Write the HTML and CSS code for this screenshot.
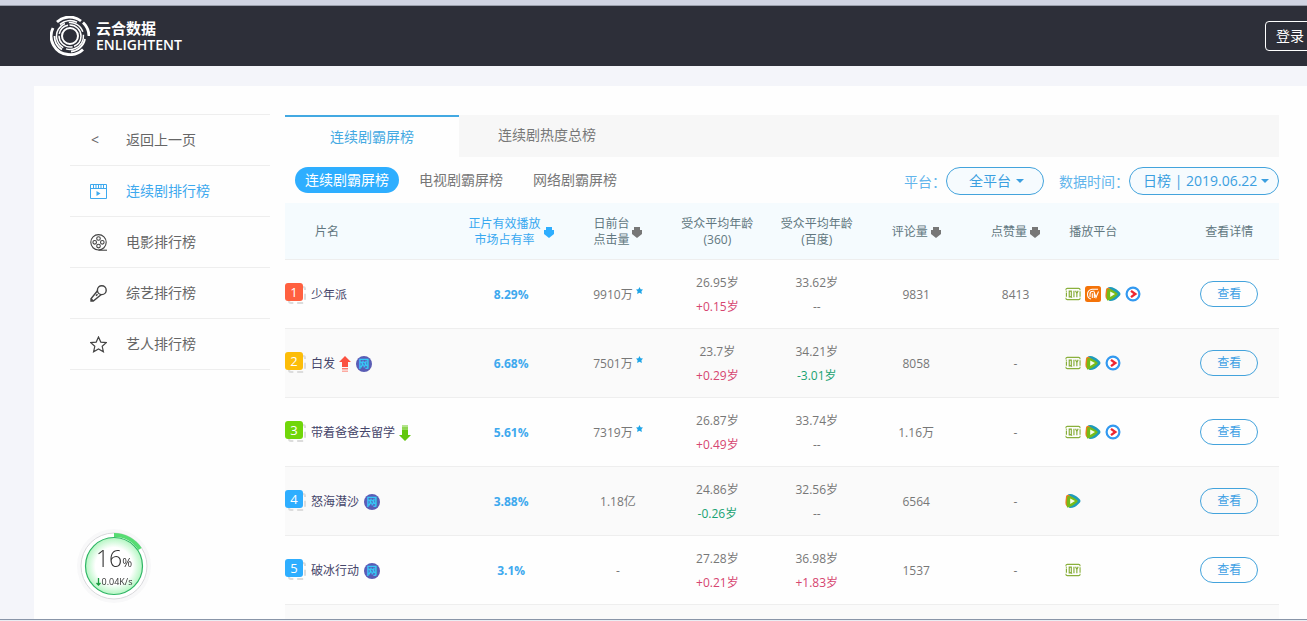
FILE: index.html
```html
<!DOCTYPE html>
<html lang="zh-CN">
<head>
<meta charset="utf-8">
<meta name="viewport" content="width=device-width, initial-scale=1">
<title>云合数据 - 连续剧霸屏榜</title>
<link rel="stylesheet" href="styles.css">
</head>
<body>
<svg class="defs" aria-hidden="true">
  <symbol id="sort" viewBox="0 0 10 11"><path d="M2 0h6v3h2v4L5 11 0 7V3h2z" fill="currentColor"/></symbol>
  <symbol id="star" viewBox="0 0 8 8"><path d="M4 0 5.300 2.500 8 2.800 6.200 4.900 6.700 8 4 6.700 1.300 8 1.800 4.900 0 2.800l2.700-.3z" fill="#1ea5e8"/></symbol>
  <symbol id="up" viewBox="0 0 12 16"><path d="M6 0l6 6H9v5H3V6H0z" fill="#fb5140"/><path d="M3 12h6v1.500H3z" fill="#fd7a6c"/><path d="M3 14.500h6V16H3z" fill="#fdaaa1"/></symbol>
  <symbol id="down" viewBox="0 0 12 16"><path d="M3 0h6v2H3z" fill="#b5e48f"/><path d="M3 2h6v2.500H3z" fill="#8fd652"/><path d="M3 4.500h6V10h3l-6 6-6-6h3z" fill="#62c70b"/></symbol>
  <symbol id="iqiyi" viewBox="0 0 17 14"><path d="M1 3V2.500Q1 1 2.500 1H14.500Q16 1 16 2.500V3M1 11v.5Q1 13 2.500 13H14.500Q16 13 16 11.500V11M16 4v6" fill="none" stroke="#8ab03c" stroke-width="1.200"/><path d="M1.500 5.500V10M1.500 3.600v1M4.500 4h2.200v6H4.500zM6 9l1.400 2M9.500 3.500v7M11.200 3.500l1.400 3 1.400-3M12.600 6.500v4" fill="none" stroke="#83aa33" stroke-width="1.200"/></symbol>
  <symbol id="mango" viewBox="0 0 16 16"><rect width="16" height="16" rx="2.500" fill="#f47309"/><path d="M6 13Q2.500 12 2.500 8.500 2.500 4 7 3.200h6M5 11V8Q5 5.300 8 5.300h1.500M7.300 7.200V12M9.300 6v6M9.300 6.500l1.700 5 2.500-6" fill="none" stroke="#fff" stroke-width="1.100"/></symbol>
  <symbol id="tencent" viewBox="0 0 16 16"><path d="M3 1.300Q8-.3 14 5.500 17 8 14 10.500 9 15.800 4 15 7 8 3 1.300z" fill="#1e9cb9"/><path d="M1 3.500Q1.500 1 4 2L8 5 2 13.500Q0 12 .5 8z" fill="#ef7a20"/><path d="M2.500 3Q6 2.500 12 7q1.500 1 0 2.200Q6 14.500 2 14.500 1 9 2.500 3z" fill="#75bb18"/><path d="M5.200 5.500 10 8l-4.800 3z" fill="#f8ffe9"/></symbol>
  <symbol id="youku" viewBox="0 0 16 16"><circle cx="8" cy="8" r="6.400" fill="#fff" stroke="#3299f0" stroke-width="2.200"/><path d="M6 4.900 10.300 8 6 11.100" fill="none" stroke="#ee2631" stroke-width="2.400"/></symbol>
</svg>

<div class="window-edge"></div>
<header class="site-header">
  <a class="brand" href="#">
    <svg class="brand-mark" viewBox="0 0 40 40" fill="none" stroke="#fff" aria-hidden="true">
      <circle cx="20" cy="20" r="8" stroke-width="2"/>
      <circle cx="20" cy="20" r="11" stroke-width="1.500" stroke-dasharray="13 1.500 20 2"/>
      <circle cx="20" cy="20" r="13.500" stroke-width="1.500" stroke-dasharray="18 3 30 4" transform="rotate(30 20 20)"/>
      <path d="M7 6A18.500 18.500 0 0 1 31 5M39 20A19 19 0 0 0 33 6.500M3 12A18.500 18.500 0 0 0 18 38.500M18 38.500A18.500 18.500 0 0 0 33 33.500" stroke-width="2.800"/>
      <path d="M10 8.500A15.500 15.500 0 0 1 27 6.200M4.500 20A15.500 15.500 0 0 0 12 33.500M35 23A15.500 15.500 0 0 1 21 35.500" stroke-width="1.800"/>
    </svg>
    <span class="brand-text"><span class="brand-cn">云合数据</span><span class="brand-en">ENLIGHTENT</span></span>
  </a>
  <button class="login" type="button">登录</button>
</header>

<div class="page">
  <div class="panel">
    <nav class="sidebar">
      <a class="side-link" href="#"><span class="side-icon back">&lt;</span>返回上一页</a>
      <a class="side-link active" href="#"><span class="side-icon"><svg viewBox="0 0 17 15" fill="none" stroke="currentColor"><path d="M.5.5h16v14H.5zM.5 4.500h16M3.500.5v4M6 .5v4M8.500.5v4M11 .5v4M13.500.5v4"/><path d="M6.500 7v5l4-2.500z" fill="currentColor" stroke="none"/></svg></span>连续剧排行榜</a>
      <a class="side-link" href="#"><span class="side-icon"><svg viewBox="0 0 17 17" fill="none" stroke="currentColor" stroke-width="1.100"><circle cx="8.500" cy="8.300" r="7.700"/><circle cx="8.500" cy="4.500" r="1.800"/><circle cx="8.500" cy="12.100" r="1.800"/><circle cx="4.700" cy="8.300" r="1.800"/><circle cx="12.300" cy="8.300" r="1.800"/><path d="M8.500 16.200H17"/></svg></span>电影排行榜</a>
      <a class="side-link" href="#"><span class="side-icon"><svg viewBox="0 0 17 17" fill="none" stroke="currentColor" stroke-width="1.400"><circle cx="11.800" cy="5.200" r="4.400"/><path d="M7.500 5.800 1 13.700V16h2.300l8-6.500M1 13.700 3.300 16M6 10.800l1.500-1.600"/></svg></span>综艺排行榜</a>
      <a class="side-link" href="#"><span class="side-icon"><svg viewBox="0 0 17 17" fill="none" stroke="currentColor" stroke-width="1.200"><path d="M8.500 1 10.800 6.100 16.300 6.600 12.200 10.300 13.400 15.800 8.500 13 3.600 15.800 4.800 10.300.7 6.600 6.200 6.100z"/></svg></span>艺人排行榜</a>
    </nav>

    <main class="content">
      <div class="tabs">
        <button class="tab active" type="button">连续剧霸屏榜</button>
        <button class="tab" type="button">连续剧热度总榜</button>
      </div>
      <div class="filters">
        <div class="pills">
          <button class="pill active" type="button">连续剧霸屏榜</button>
          <button class="pill" type="button">电视剧霸屏榜</button>
          <button class="pill" type="button">网络剧霸屏榜</button>
        </div>
        <div class="selects">
          <div class="field"><label for="platform">平台<span class="colon">：</span></label><span class="select-box"><select id="platform" class="platform"><option>全平台</option></select></span></div>
          <div class="field"><label for="date">数据时间<span class="colon">：</span></label><span class="select-box near"><select id="date" class="date"><option>日榜 | 2019.06.22</option></select></span></div>
        </div>
      </div>

      <table class="ranking">
        <colgroup><col class="c-name"><col class="c-share"><col class="c-num"><col class="c-num"><col class="c-num"><col class="c-num"><col class="c-num"><col class="c-plat"><col></colgroup>
        <thead>
          <tr>
            <th class="h-name">片名</th>
            <th class="sorted"><span class="sortable"><span>正片有效播放<br>市场占有率</span><svg><use href="#sort"/></svg></span></th>
            <th><span class="sortable"><span>日前台<br>点击量</span><svg><use href="#sort"/></svg></span></th>
            <th>受众平均年龄<br>(360)</th>
            <th>受众平均年龄<br>(百度)</th>
            <th><span class="sortable"><span>评论量</span><svg><use href="#sort"/></svg></span></th>
            <th><span class="sortable"><span>点赞量</span><svg><use href="#sort"/></svg></span></th>
            <th class="h-plat">播放平台</th>
            <th>查看详情</th>
          </tr>
        </thead>
        <tbody>
          <tr>
            <td><div class="title"><span class="rank r1">1</span><span>少年派</span></div></td>
            <td class="share">8.29%</td>
            <td><span class="clicks">9910万<svg><use href="#star"/></svg></span></td>
            <td>26.95岁<br><span class="rise">+0.15岁</span></td>
            <td>33.62岁<br>--</td>
            <td>9831</td><td>8413</td>
            <td class="media"><div class="platforms"><svg><use href="#iqiyi"/></svg><svg><use href="#mango"/></svg><svg><use href="#tencent"/></svg><svg><use href="#youku"/></svg></div></td>
            <td class="media"><button class="view" type="button">查看</button></td>
          </tr>
          <tr>
            <td><div class="title"><span class="rank r2">2</span><span>白发</span><svg class="trend"><use href="#up"/></svg><span class="web">网</span></div></td>
            <td class="share">6.68%</td>
            <td><span class="clicks">7501万<svg><use href="#star"/></svg></span></td>
            <td>23.7岁<br><span class="rise">+0.29岁</span></td>
            <td>34.21岁<br><span class="fall">-3.01岁</span></td>
            <td>8058</td><td>-</td>
            <td class="media"><div class="platforms"><svg><use href="#iqiyi"/></svg><svg><use href="#tencent"/></svg><svg><use href="#youku"/></svg></div></td>
            <td class="media"><button class="view" type="button">查看</button></td>
          </tr>
          <tr>
            <td><div class="title"><span class="rank r3">3</span><span>带着爸爸去留学</span><svg class="trend"><use href="#down"/></svg></div></td>
            <td class="share">5.61%</td>
            <td><span class="clicks">7319万<svg><use href="#star"/></svg></span></td>
            <td>26.87岁<br><span class="rise">+0.49岁</span></td>
            <td>33.74岁<br>--</td>
            <td>1.16万</td><td>-</td>
            <td class="media"><div class="platforms"><svg><use href="#iqiyi"/></svg><svg><use href="#tencent"/></svg><svg><use href="#youku"/></svg></div></td>
            <td class="media"><button class="view" type="button">查看</button></td>
          </tr>
          <tr>
            <td><div class="title"><span class="rank">4</span><span>怒海潜沙</span><span class="web">网</span></div></td>
            <td class="share">3.88%</td>
            <td>1.18亿</td>
            <td>24.86岁<br><span class="fall">-0.26岁</span></td>
            <td>32.56岁<br>--</td>
            <td>6564</td><td>-</td>
            <td class="media"><div class="platforms"><svg><use href="#tencent"/></svg></div></td>
            <td class="media"><button class="view" type="button">查看</button></td>
          </tr>
          <tr>
            <td><div class="title"><span class="rank">5</span><span>破冰行动</span><span class="web">网</span></div></td>
            <td class="share">3.1%</td>
            <td>-</td>
            <td>27.28岁<br><span class="rise">+0.21岁</span></td>
            <td>36.98岁<br><span class="rise">+1.83岁</span></td>
            <td>1537</td><td>-</td>
            <td class="media"><div class="platforms"><svg><use href="#iqiyi"/></svg></div></td>
            <td class="media"><button class="view" type="button">查看</button></td>
          </tr>
          <tr><td colspan="9"></td></tr>
        </tbody>
      </table>
    </main>
  </div>
</div>
<div class="window-foot"></div>

<aside class="monitor">
  <svg class="monitor-ring" viewBox="0 0 76 76" aria-hidden="true">
    <defs><radialGradient id="glow"><stop offset=".65" stop-color="#fff"/><stop offset="1" stop-color="#b4f6c2"/></radialGradient></defs>
    <circle cx="38" cy="38" r="37" fill="#f8f8f9"/>
    <circle cx="38" cy="38" r="33" fill="#fff" stroke="#d9d9dc"/>
    <circle cx="38" cy="38" r="28.500" fill="url(#glow)" stroke="#2fb565" stroke-width="1.200"/>
    <path d="M38 7A31 31 0 0 1 64 21" fill="none" stroke="#56dc72" stroke-width="4"/>
  </svg>
  <div class="monitor-text">
    <div class="usage">16<small>%</small></div>
    <div class="speed"><svg viewBox="0 0 5 8" fill="none" stroke="#179b3c" stroke-width="1.300"><path d="M2.500 0v7M.5 5l2 2 2-2"/></svg>0.04K/s</div>
  </div>
</aside>
</body>
</html>
```

FILE: styles.css
```css
* { box-sizing: border-box; }

body {
  margin: 0;
  height: 100vh;
  display: flex;
  flex-direction: column;
  overflow: hidden;
  background: #f4f5fa;
  color: #777;
  font: 12px/24px "Open Sans", "Noto Sans CJK SC", sans-serif;
}

button, select { font: inherit; color: inherit; border: 0; background: none; padding: 0; }
button { cursor: pointer; }
a { color: inherit; text-decoration: none; }
.defs { position: absolute; width: 0; height: 0; }

.window-edge { flex: none; height: 6px; background: #d0d4e2; border-bottom: 1px solid #9a9fac; }
.window-foot { flex: none; height: 2px; background: #e9edf3; border-top: 1px solid #8995a8; }

/* Header */
.site-header {
  flex: none;
  height: 60px;
  display: flex;
  align-items: center;
  justify-content: space-between;
  padding-left: 50px;
  overflow: hidden;
  background: #2d2f39;
  color: #fff;
}
.brand { display: flex; align-items: center; gap: 6px; }
.brand-mark { width: 40px; height: 40px; }
.brand-text { display: flex; flex-direction: column; }
.brand-cn { font-size: 15px; font-weight: 700; line-height: 17px; }
.brand-en { font-size: 14px; font-weight: 600; line-height: 16px; }
.login {
  width: 50px;
  height: 30px;
  margin-right: -8px;
  border: 1px solid #fff;
  border-radius: 4px;
  font-size: 14px;
}

/* Page panel */
.page { flex: 1; min-height: 0; padding: 20px 0 0 34px; overflow: hidden; }
.panel {
  display: flex;
  gap: 15px;
  min-height: 100%;
  padding: 28px 28px 0 36px;
  background: #fefefe;
}

.sidebar { flex: none; width: 200px; font-size: 14px; }
.side-link {
  display: flex;
  align-items: center;
  gap: 19px;
  height: 51px;
  padding-left: 20px;
  border-top: 1px solid #eee;
  color: #666;
}
.side-link:last-child { height: 52px; border-bottom: 1px solid #eee; }
.side-link.active { color: #3ea9ee; }
.side-icon { display: flex; width: 17px; }
.side-icon svg { width: 17px; color: #444; }
.active .side-icon svg { color: inherit; }
.back { padding-left: 1px; }

.content { flex: 1; min-width: 0; padding-top: 1px; }
.tabs { display: flex; height: 42px; background: #f7f7f7; font-size: 14px; }
.tab { padding: 0 39px 2px; }
.tab.active {
  padding: 0 45px;
  border-top: 2px solid #43a9e2;
  background: #fefefe;
  color: #43a9e2;
}

.filters { display: flex; justify-content: space-between; align-items: flex-start; height: 46px; padding: 10px 0 0 10px; font-size: 14px; }
.pills { display: flex; gap: 10px; }
.pill { height: 26px; padding: 0 10px; border-radius: 13px; }
.pill.active { background: #2eaeff; color: #fff; }
.selects { display: flex; gap: 15px; }
.field { display: flex; align-items: center; color: #62b5ec; }
.colon { font-family: "Noto Sans CJK TC", sans-serif; }
.select-box { position: relative; display: flex; color: #3b9fe0; }
.select-box select {
  appearance: none;
  height: 28px;
  border: 1px solid #43a3dc;
  border-radius: 14px;
  background: #f6fbfe;
}
.platform { width: 98px; padding-left: 22px; }
.date { width: 150px; padding-left: 13px; }
.select-box::after {
  content: "";
  position: absolute;
  top: 12px;
  right: 20px;
  border: 4px solid transparent;
  border-top-color: currentColor;
  border-bottom: 0;
  pointer-events: none;
}
.select-box.near::after { right: 10px; }

/* Ranking table */
.ranking { width: 100%; table-layout: fixed; border-spacing: 0; text-align: center; }
.c-name { width: 17%; }
.c-share { width: 11.5%; }
.c-num { width: 10%; }
.c-plat { width: 11.5%; }
th, td { padding: 2px 0 0; border-bottom: 1px solid #eee; }
th { height: 57px; background: #f5fbfe; color: #617780; font-weight: 400; line-height: 16px; }
td { height: 69px; }
tbody tr:nth-child(even) { background: #fafafa; }
.h-name { padding-left: 30px; text-align: left; }
.h-plat { padding-left: 4px; text-align: left; }
.sorted { color: #38a8f0; }
.sortable { display: inline-flex; align-items: center; gap: 3px; vertical-align: middle; }
.sortable svg { width: 10px; height: 11px; color: #777; }
.sorted svg { color: #2eaeff; }

.title { display: flex; align-items: center; isolation: isolate; color: #45456a; }
.rank {
  position: relative;
  width: 18px;
  height: 18px;
  margin: 0 8px 6px 0;
  border-radius: 3px;
  background: #2eaeff;
  color: #fff;
  font-size: 13px;
  line-height: 18px;
  text-align: center;
}
.rank::after {
  content: "";
  position: absolute;
  z-index: -1;
  inset: 3px -3px -3px 3px;
  border: 2px dashed #dcdcdc;
  border-radius: 3px;
}
.r1 { background: #ff6040; }
.r2 { background: #fcbd09; }
.r3 { background: #70d60a; }
.trend { width: 12px; height: 16px; margin-left: 4px; }
.web {
  width: 16px;
  height: 16px;
  margin-left: 5px;
  border-radius: 8px;
  background: #5a5cb4;
  color: #35c8f8;
  font-size: 11px;
  font-weight: 700;
  line-height: 16px;
  text-align: center;
}
.share { color: #3ea9ee; font-weight: 700; }
.clicks { display: inline-flex; gap: 3px; }
.clicks svg { width: 7px; height: 7px; margin-top: 4px; }
.rise { color: #d64570; }
.fall { color: #18a271; }
.media { padding: 0; }
.platforms { display: flex; gap: 4px; }
.platforms svg { width: 16px; height: 16px; }
.view {
  width: 58px;
  height: 26px;
  border: 1px solid #43a3dc;
  border-radius: 13px;
  color: #3ea0e4;
}

/* Floating system monitor */
.monitor { position: fixed; left: 76px; bottom: 17px; width: 76px; height: 76px; color: #333; }
.monitor-ring { position: absolute; width: 76px; height: 76px; }
.monitor-text { position: relative; padding-top: 18px; text-align: center; }
.usage { font-size: 23px; font-weight: 300; line-height: 25px; }
.usage small { font-size: 12px; font-weight: 400; }
.speed { display: flex; justify-content: center; align-items: center; gap: 1px; font-size: 9px; line-height: 14px; }
.speed svg { width: 5px; height: 8px; }
```
